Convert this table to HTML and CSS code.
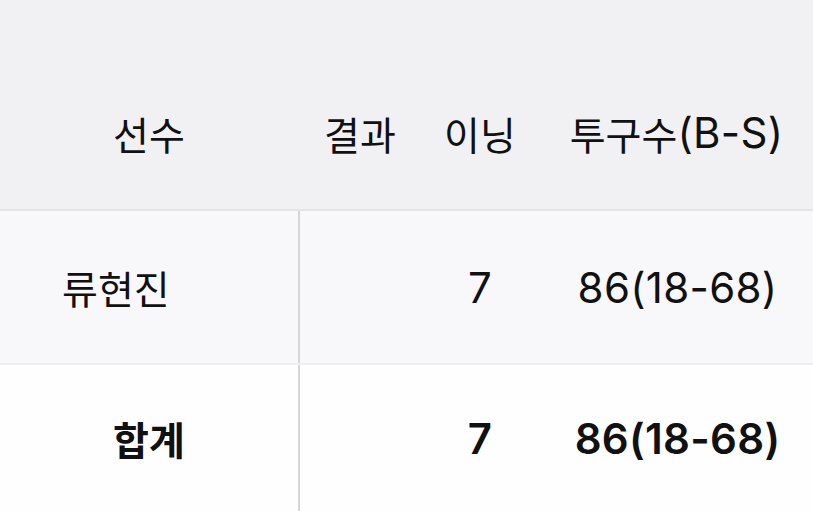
FILE: index.html
```html
<!DOCTYPE html>
<html lang="ko">
<head>
<meta charset="utf-8">
<link rel="stylesheet" href="styles.css">
</head>
<body>
<div class="table">
  <div class="row head">
    <div class="cell c1 center">선수</div>
    <div class="cell c2 center">결과</div>
    <div class="cell c3 center">이닝</div>
    <div class="cell c4 center">투구수<span class="num">(B-S)</span></div>
  </div>
  <div class="row body r1">
    <div class="cell c1 name">류현진</div>
    <div class="cell c2 center"></div>
    <div class="cell c3 center"><span class="num">7</span></div>
    <div class="cell c4 center"><span class="num">86(18-68)</span></div>
  </div>
  <div class="row body r2 total">
    <div class="cell c1 center">합계</div>
    <div class="cell c2 center"></div>
    <div class="cell c3 center"><span class="num">7</span></div>
    <div class="cell c4 center"><span class="num">86(18-68)</span></div>
  </div>
</div>
</body>
</html>
```

FILE: styles.css
```css
html, body {
  margin: 0;
  padding: 0;
  background: #fefefe;
}
body {
  width: 813px;
  height: 511px;
  overflow: hidden;
  font-family: "Noto Sans CJK KR", "Noto Sans", sans-serif;
  color: #111;
}
.table {
  display: flex;
  flex-direction: column;
}
.row {
  display: flex;
  align-items: stretch;
}
.head {
  height: 211px;
  background: #f1f1f3;
  border-bottom: 2px solid #e5e5e8;
  box-sizing: border-box;
}
.head .cell {
  padding-top: 56px;
  font-size: 39px;
}
.r1 {
  height: 154px;
  background: #f8f8fa;
  border-bottom: 2px solid #eeeef0;
  box-sizing: border-box;
}
.r2 {
  height: 146px;
  background: #fefefe;
}
.cell {
  display: flex;
  align-items: center;
  font-size: 39px;
  box-sizing: border-box;
}
.num {
  font-family: "Inter", "Noto Sans", sans-serif;
  font-size: 42px;
  letter-spacing: 0.3px;
}
.center { justify-content: center; }
.c1 { width: 298px; }
.c2 { width: 124px; }
.c3 { width: 116px; }
.c4 { flex: 1; }
.head .c4 { padding-left: 2px; }
.body .c1 {
  border-right: 2px solid #d6d6d8;
  width: 300px;
}
.body .c2 { width: 122px; }
.body .c4 { padding-left: 4px; }
.name {
  padding-left: 62px;
}
.total .cell {
  font-weight: 700;
}
.total .num {
  font-weight: 600;
}
```
